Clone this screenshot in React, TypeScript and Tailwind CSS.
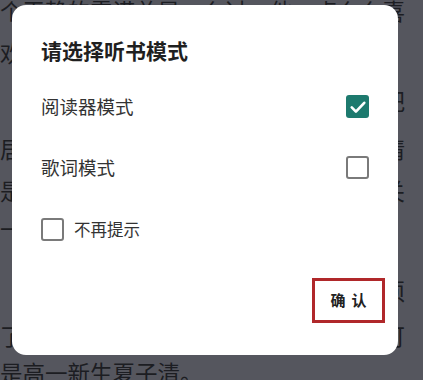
import React from "react";

// background page lines: text and gap above (px)
const bgLines: [string, string][] = [
  ["个平静的霉诺总是，么过，他，点么么喜", "-mt-[8px]"],
  ["欢在这座城市的角落里看书，偶尔也不", "mt-[6px]"],
  ["　　目光投向窗外的街道，等待着一个把", "mt-[12px]"],
  ["居住在旁边的那个女孩，总是带着微笑情", "mt-[12px]"],
  ["是这样的日子一天天过去，没有什么相关", "mt-[6px]"],
  ["一", "mt-[2px]"],
  ["　　那一年的夏天，她终于明白自己必须", "mt-[26px]"],
  ["了解所有的故事，才能知道一切都是可可", "mt-[9px]"],
  ["是高一新生夏子清。", "mt-[1px]"],
];

function CheckBox({ checked }: { checked?: boolean }) {
  if (checked) {
    return (
      <span className="grid h-[23px] w-[23px] place-items-center rounded-[3px] bg-[#1d7a6e]">
        <svg viewBox="0 0 24 24" className="h-[20px] w-[20px]" fill="none">
          <path d="M4.5 12.5l5 5L19.5 7" stroke="white" strokeWidth="3.2" strokeLinecap="round" strokeLinejoin="round" />
        </svg>
      </span>
    );
  }
  return <span className="block h-[23px] w-[23px] rounded-[3px] border-[2.5px] border-[#7a7a7a] bg-white" />;
}

export default function App() {
  return (
    <div
      className="relative h-[380px] w-[423px] overflow-hidden bg-[#55565e]"
      style={{ fontFamily: '"Noto Sans CJK SC", "Noto Sans", sans-serif' }}
    >
      <div className="text-[22.5px] leading-[36px] text-[#1c1d22]">
        {bgLines.map(([l, m], i) => (
          <div key={i} className={`h-[36px] whitespace-nowrap ${m}`}>
            {l}
          </div>
        ))}
      </div>

      <div className="absolute left-[12px] top-[5px] flex w-[386px] flex-col rounded-[14px] bg-white pb-[32px] pl-[29px]">
        <div className="pt-[30px] text-[21px] font-bold leading-[30px] text-[#1f1f1f]">请选择听书模式</div>
        <div className="mt-[11px] flex flex-col pr-[29px]">
          <div className="flex h-[61px] items-center justify-between">
            <span className="text-[18.5px] text-[#333]">阅读器模式</span>
            <CheckBox checked />
          </div>
          <div className="flex h-[61px] items-center justify-between">
            <span className="text-[18.5px] text-[#333]">歌词模式</span>
            <CheckBox />
          </div>
          <div className="flex h-[62px] items-center gap-[10px]">
            <CheckBox />
            <span className="text-[16.5px] text-[#333]">不再提示</span>
          </div>
        </div>
        <div className="mt-[18px] flex justify-end pr-[13px]">
          <button className="flex h-[45px] w-[73px] items-center justify-center border-[3px] border-[#b0282a] text-[15px] font-bold tracking-[6px] text-[#222]">
            <span className="pl-[6px]">确认</span>
          </button>
        </div>
      </div>
    </div>
  );
}
